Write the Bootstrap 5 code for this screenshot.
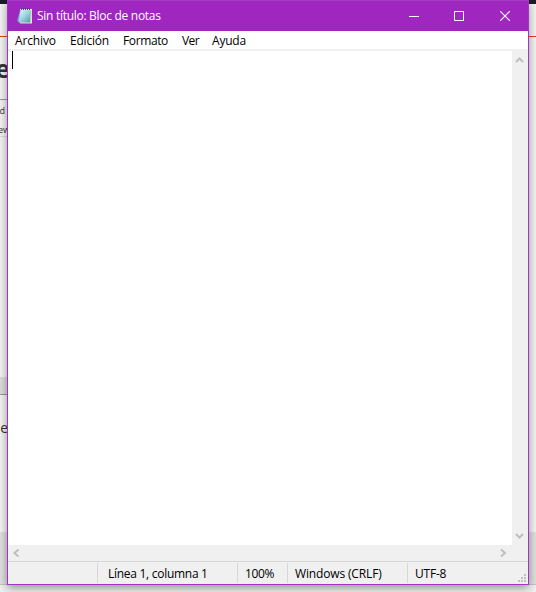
<!DOCTYPE html>
<html lang="es">
<head>
<meta charset="utf-8">
<title>Sin título: Bloc de notas</title>
<link href="https://cdn.jsdelivr.net/npm/bootstrap@5.3.0/dist/css/bootstrap.min.css" rel="stylesheet">
<style>
body{width:536px;height:592px;background:#f1f1f1;font:12px/16px "Open Sans","Noto Sans",sans-serif;color:#000}
.desk{width:536px;height:592px}
.strip-dark{height:4px;background:#1e1b29}
.strip-top{height:32px;background:#f4f4f4}
.strip-red{height:1px;background:#e8401c}
.pane{height:495px;background:#f4f4f4}
.pane-foot{height:53px;background:#e0e0e0;border-bottom:1px solid #c4c4c4}
.peek{right:528px;white-space:nowrap;color:#333}
.peek-h{top:52px;font-size:25px;line-height:32px;font-weight:700;right:526px}
.peek-a{top:105px;font-size:9px;line-height:12px;right:531px}
.peek-b{top:124px;font-size:9px;line-height:12px;right:526px}
.peek-c{top:419px;font-size:14px;line-height:18px}
.peek-c i{color:#2f7fd0;font-style:normal}
.rule{left:0;width:7px;height:1px;background:#999}
.rule-a{top:99px}.rule-b{top:136px;background:#ddd}.rule-c{top:394px}
.band{left:0;top:377px;width:7px;height:17px;background:#dcdcdc}
.win{left:7px;top:0;width:522px;height:585px;border:1px solid #a235c4;border-top:0;box-shadow:0 3px 9px rgba(0,0,0,.4);background:#fff}
.titlebar{height:31px;background:#a026c0;border-top:1px solid #a53bc0;color:#fff;padding-left:8px}
.titlebar svg{display:block}
.caption{width:46px;height:30px;padding:0;border:0;background:none}
.caption-min{padding-left:2px}
.app-name{margin-left:3px;letter-spacing:-.29px}
.menubar{height:20px;border-bottom:2px solid #f0f0f0}
.menubar a{padding-left:7px;color:#000;text-decoration:none;line-height:20px}
.m1{width:55px;letter-spacing:-.15px}.m2{width:53px;letter-spacing:-.2px}.m3{width:59px;letter-spacing:-.38px}.m4{width:30px;letter-spacing:-.6px}.m5{letter-spacing:-.2px}
.editor{height:494px}
.caret{width:1px;height:18px;background:#000;margin-left:4px}
.vbar{width:16px;background:#f0f0f0;padding:6px 3px 6px}
.hbar{height:16px;background:#f0f0f0;padding:0 21px 0 5px}
.statusbar{height:23px;background:#f0f0f0;border-top:1px solid #d7d7d7;padding-top:1px}
.cell{height:20px;border-left:1px solid #d7d7d7;line-height:22px;padding-left:7px;white-space:nowrap}
.c0{width:89px}.c1{width:140px;padding-left:10px;letter-spacing:-.28px}.c2{width:50px;letter-spacing:-.4px}.c3{width:120px;letter-spacing:-.15px}.c4{letter-spacing:-.2px}
.grip{margin:0 2px 2px auto}
</style>
<script src="https://cdn.jsdelivr.net/npm/bootstrap@5.3.0/dist/js/bootstrap.bundle.min.js"></script>
</head>
<body class="m-0 overflow-hidden">
<div class="desk position-relative overflow-hidden">
  <div class="strip-dark"></div><div class="strip-top"></div><div class="strip-red"></div>
  <div class="pane"></div><div class="pane-foot"></div>
  <div class="rule rule-a position-absolute"></div><div class="rule rule-b position-absolute"></div>
  <div class="band position-absolute"></div><div class="rule rule-c position-absolute"></div>
  <span class="peek peek-h position-absolute">e</span><span class="peek peek-a position-absolute">d</span>
  <span class="peek peek-b position-absolute">ew</span><span class="peek peek-c position-absolute"><i>n</i>e</span>

  <main class="win position-absolute d-flex flex-column">
    <header class="titlebar d-flex align-items-center">
      <svg width="18" height="18" viewBox="0 0 18 18"><defs><linearGradient id="pg" x1="0" y1="0" x2="1" y2="1"><stop offset="0" stop-color="#e4f8fa"/><stop offset=".5" stop-color="#9bd3de"/><stop offset="1" stop-color="#4796ab"/></linearGradient></defs><path d="M4 3L1 14l3 1z" fill="#6f9fd0"/><path d="M5 3h11v13.5H4z" fill="#e9ddc0"/><path d="M4.5 3h10.5l-1 12.5H2.5z" fill="url(#pg)"/><path d="M4 2.500h12" stroke="#e8eef0"/><path d="M5.500 1v2M7.500 1v2M9.500 1v2M11.500 1v2M13.500 1v2" stroke="#39545c"/></svg>
      <span class="app-name me-auto">Sin título: Bloc de notas</span>
      <button class="caption caption-min" aria-label="Minimizar"><svg class="mx-auto" width="10" height="10"><path d="M0 5.5h10" stroke="#fff"/></svg></button>
      <button class="caption" aria-label="Maximizar"><svg class="mx-auto" width="10" height="10"><path d="M.5.5h9v9h-9z" fill="none" stroke="#fff"/></svg></button>
      <button class="caption" aria-label="Cerrar"><svg class="mx-auto" width="10" height="10"><path d="M0 0l10 10M10 0L0 10" stroke="#fff" stroke-width="1.1"/></svg></button>
    </header>
    <nav class="menubar d-flex"><a class="m1" href="#">Archivo</a><a class="m2" href="#">Edición</a><a class="m3" href="#">Formato</a><a class="m4" href="#">Ver</a><a class="m5" href="#">Ayuda</a></nav>
    <section class="editor d-flex">
      <div class="flex-grow-1"><div class="caret"></div></div>
      <div class="vbar d-flex flex-column justify-content-between">
        <svg width="9" height="6"><path d="M1 5l3.500-3.500L8 5" fill="none" stroke="#bfbfbf" stroke-width="2"/></svg>
        <svg width="9" height="6"><path d="M1 1l3.500 3.500L8 1" fill="none" stroke="#bfbfbf" stroke-width="2"/></svg>
      </div>
    </section>
    <div class="hbar d-flex justify-content-between align-items-center">
      <svg width="7" height="8"><path d="M5.500 .5L1.500 4l4 3.500" fill="none" stroke="#bfbfbf" stroke-width="2"/></svg>
      <svg width="7" height="8"><path d="M1 .5L5 4 1 7.500" fill="none" stroke="#bfbfbf" stroke-width="2"/></svg>
    </div>
    <footer class="statusbar d-flex">
      <div class="c0"></div><div class="cell c1">Línea 1, columna 1</div><div class="cell c2">100%</div><div class="cell c3">Windows (CRLF)</div><div class="cell c4">UTF-8</div>
      <svg class="grip align-self-end" width="8" height="8"><path d="M6 0h2v2H6zM3 3h2v2H3zM6 3h2v2H6zM0 6h2v2H0zM3 6h2v2H3zM6 6h2v2H6z" fill="#bfbfbf"/></svg>
    </footer>
  </main>
</div>
</body>
</html>
